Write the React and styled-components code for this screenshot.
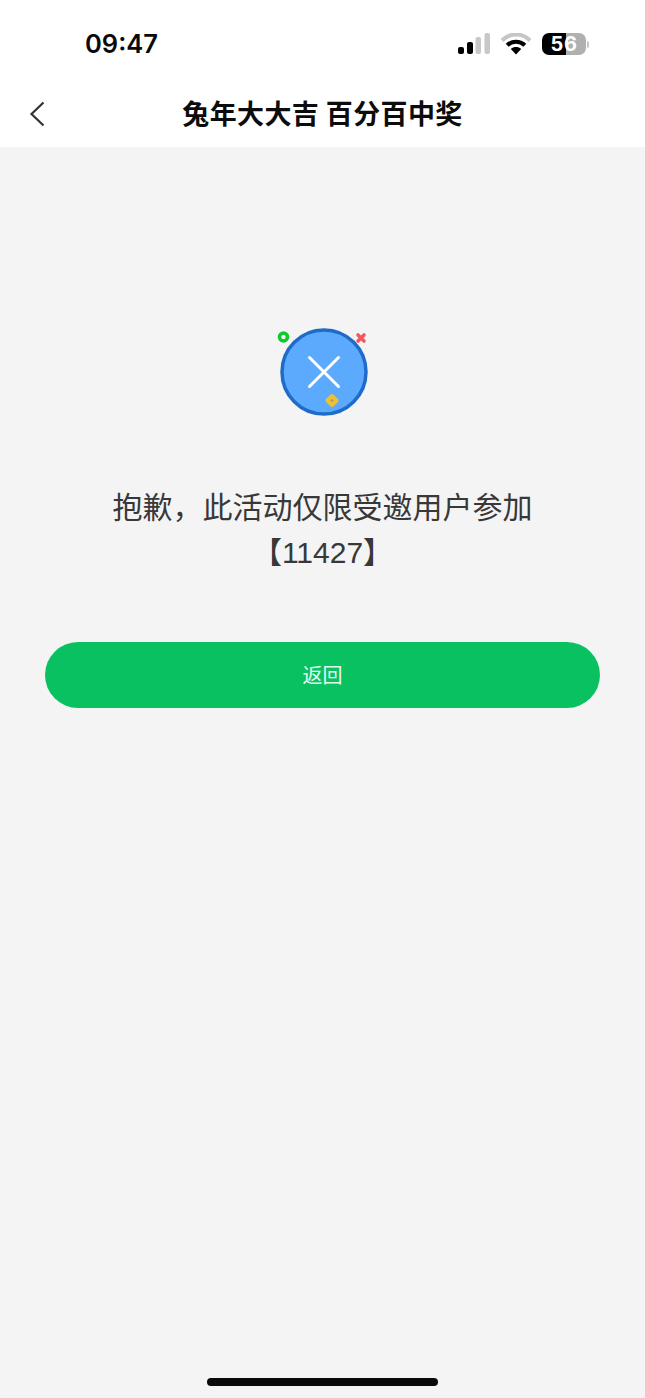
import React from "react";
import styled, { createGlobalStyle } from "styled-components";

const Global = createGlobalStyle`
  html, body { margin: 0; padding: 0; background: #f4f4f4; }
  body { font-family: "Liberation Sans", "Noto Sans CJK SC", sans-serif; }
`;
const Page = styled.div`
  width: 645px; height: 1398px; position: relative; overflow: hidden;
  display: flex; flex-direction: column; background: #f4f4f4;
`;
const Header = styled.header`
  background: #fff; height: 147px; flex: none; display: flex; flex-direction: column;
`;
const StatusBar = styled.div`
  height: 80px; display: flex; align-items: center; justify-content: space-between;
  padding: 7px 56px 0 85px; box-sizing: border-box; flex: none;
`;
const Time = styled.span`
  font-family: Inter, "Liberation Sans", sans-serif; font-size: 25.5px; font-weight: 600; color: #0a0a0a;
`;
const StatusIcons = styled.div`
  display: flex; align-items: center; gap: 11px; padding-top: 1px;
`;
const Battery = styled.div`
  width: 44px; height: 22px; border-radius: 7px; overflow: hidden;
  background: linear-gradient(90deg, #000 0 55%, #b0b0b0 55% 100%);
  display: flex; align-items: center; justify-content: center;
  font-family: Inter, "Liberation Sans", sans-serif; font-weight: 700; font-size: 20px; color: #fff; letter-spacing: 0.5px;
`;
const BatteryWrap = styled.div`
  display: flex; align-items: center; gap: 1px;
`;
const BatteryTip = styled.div`
  width: 2px; height: 7px; border-radius: 0 2px 2px 0; background: #c4c4c4;
`;
const NavBar = styled.div`
  position: relative; height: 67px; display: flex; align-items: center; justify-content: center;
`;
const BackIcon = styled.svg`
  position: absolute; left: 28px; top: 20px;
`;
const Title = styled.h1`
  margin: 0; font-size: 27px; font-weight: 700; color: #0c0c0c; letter-spacing: 0.4px; line-height: 67px;
  font-family: "Noto Sans CJK SC", sans-serif; position: relative; top: -1px;
`;
const Content = styled.main`
  flex: 1; display: flex; flex-direction: column; align-items: center; padding-top: 177px;
`;
const BadgeSlot = styled.div`
  margin-left: 4px; line-height: 0;
`;
const Message = styled.div`
  margin-top: 69px; text-align: center; font-size: 30px; line-height: 45px; color: #383838;
  font-family: "Liberation Sans", "Noto Sans CJK SC", sans-serif;
`;
const Action = styled.button`
  margin-top: 67px; width: 555px; height: 66px; border: 0; border-radius: 33px; background: #09c161;
  font-size: 20px; font-family: "Noto Sans CJK SC", sans-serif; padding: 0 0 2px;
  color: #e6f9ee;
`;
const HomeBar = styled.div`
  position: absolute; left: 207px; bottom: 12px; width: 231px; height: 8px; border-radius: 4px; background: #0a0a0a;
`;

const Signal = () => (
  <svg width="33" height="22" viewBox="0 0 33 22">
    <rect x="1" y="14" width="6" height="7" rx="2" fill="#000" />
    <rect x="10" y="9" width="6" height="12" rx="2" fill="#000" />
    <rect x="18.5" y="4" width="5.5" height="17" rx="2" fill="#c8c8c8" />
    <rect x="27.5" y="0" width="5.5" height="21" rx="2" fill="#c8c8c8" />
  </svg>
);
const Wifi = () => (
  <svg width="30" height="22" viewBox="0 0 30 22">
    <path d="M1 7.5C9 -0.5 21 -0.5 29 7.5" fill="none" stroke="#c6c6c6" strokeWidth="4.2" />
    <path d="M6.2 12.2C11.2 7.6 18.8 7.6 23.8 12.2" fill="none" stroke="#000" strokeWidth="4.2" />
    <path d="M15 21.5L9.8 16C12.8 13.4 17.2 13.4 20.2 16Z" fill="#000" />
  </svg>
);
const ErrorBadge = () => (
  <svg width="96" height="92" viewBox="0 0 96 92">
    <circle cx="47" cy="48" r="42" fill="#5caafd" stroke="#1f6bc9" strokeWidth="3.5" />
    <path d="M32.5 33.5L61.5 62.5M61.5 33.5L32.5 62.5" stroke="#fff" strokeWidth="3" strokeLinecap="round" />
    <circle cx="6.5" cy="13" r="4" fill="none" stroke="#10c92c" strokeWidth="3.6" />
    <path d="M81 11L87 17M87 11L81 17" stroke="#f4585f" strokeWidth="3.6" strokeLinecap="round" />
    <path d="M55 72L59.5 76.5L55 81L50.5 76.5Z" fill="#a09a70" stroke="#ecc232" strokeWidth="4" strokeLinejoin="round" />
  </svg>
);

export default function App() {
  return (
    <Page>
      <Global />
      <Header>
        <StatusBar>
          <Time>09:47</Time>
          <StatusIcons>
            <Signal />
            <Wifi />
            <BatteryWrap>
              <Battery>56</Battery>
              <BatteryTip />
            </BatteryWrap>
          </StatusIcons>
        </StatusBar>
        <NavBar>
          <BackIcon width="20" height="28" viewBox="0 0 20 28">
            <path d="M15.5 2.5L3.5 14L15.5 25.5" fill="none" stroke="#333" strokeWidth="2.2" />
          </BackIcon>
          <Title>兔年大大吉 百分百中奖</Title>
        </NavBar>
      </Header>
      <Content>
        <BadgeSlot><ErrorBadge /></BadgeSlot>
        <Message>
          抱歉，此活动仅限受邀用户参加
          <br />
          【11427】
        </Message>
        <Action>返回</Action>
      </Content>
      <HomeBar />
    </Page>
  );
}
